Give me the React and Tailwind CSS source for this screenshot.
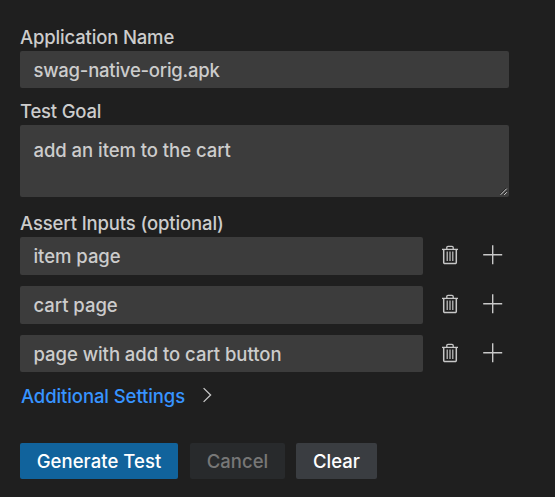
import React from "react";

function TrashIcon() {
  return (
    <svg width="18" height="20" viewBox="0 0 18 20" fill="none" stroke="#c8c8c8" strokeWidth="1.3">
      <path d="M1 4.4h16" />
      <path d="M5.8 4V2.6a1.2 1.2 0 0 1 1.2-1.2h4a1.2 1.2 0 0 1 1.2 1.2V4" />
      <path d="M2.7 4.5v12.9a1.2 1.2 0 0 0 1.2 1.2h10.2a1.2 1.2 0 0 0 1.2-1.2V4.5" strokeWidth="1.5" />
      <path d="M6.2 6.5v9.6M9 6.5v9.6M11.8 6.5v9.6" strokeWidth="1.2" />
    </svg>
  );
}

function PlusIcon() {
  return (
    <svg width="20" height="20" viewBox="0 0 20 20" fill="none" stroke="#c8c8c8" strokeWidth="1.4">
      <path d="M9.7 0.2v19M0.2 9.7h19" />
    </svg>
  );
}

function AssertRow({ text, size }) {
  return (
    <div className="flex h-[49px] items-start">
      <div className={`flex w-[403px] items-center rounded-[2px] bg-[#3c3c3c] pl-[13.5px] tracking-[-0.04px] ${size}`}>
        <span>{text}</span>
      </div>
      <button className="mt-[8px] ml-[18px]"><TrashIcon /></button>
      <button className="mt-[8px] ml-[24px]"><PlusIcon /></button>
    </div>
  );
}

export default function App() {
  return (
    <main className="h-[497px] w-[555px] overflow-hidden bg-[#1f1f1f] pt-[24px] pl-[20px] font-['Inter',sans-serif] text-[18.5px] leading-[27px] font-[450] whitespace-nowrap text-[#cccccc]">
      <div className="h-[27px] tracking-[-0.16px]">Application Name</div>
      <div className="flex h-[37px] w-[489px] items-center rounded-[2px] bg-[#3c3c3c] pt-px pl-[13.5px]">
        <span className="tracking-[-0.23px]">swag-native-orig.apk</span>
      </div>
      <div className="mt-[10px] h-[27px] tracking-[-0.2px]">Test Goal</div>
      <div className="flex h-[72px] w-[489px] justify-between rounded-[2px] bg-[#3c3c3c] pt-[12px] pl-[13.5px]">
        <span className="tracking-[-0.05px]">add an item to the cart</span>
        <svg className="mr-[1px] mb-[1px] self-end" width="8" height="8" viewBox="0 0 8 8" fill="none">
          <path d="M0.7 6.7l6-6M4.2 6.9l2.7-2.7" stroke="#d0d0d0" strokeWidth="1" />
          <path d="M0 6l6-6M3.4 6.3l3-3" stroke="#1f1f1f" strokeWidth="0.8" />
        </svg>
      </div>
      <div className="mt-[13px] h-[27px] tracking-[-0.13px]">Assert Inputs (optional)</div>
      <AssertRow text="item page" size="h-[38px]" />
      <AssertRow text="cart page" size="h-[38px]" />
      <AssertRow text="page with add to cart button" size="h-[37px] pt-px" />
      <div className="-mt-[1px] flex h-[24px] items-center pl-[1px]">
        <a className="w-[181.5px] pt-[2px] tracking-[-0.1px] text-[#3794ff]">Additional Settings</a>
        <svg width="9" height="16" viewBox="0 0 9 16" fill="none" stroke="#c8c8c8" strokeWidth="1.3">
          <path d="M0.6 1.1l7 6.9-7 6.9" />
        </svg>
      </div>
      <div className="mt-[36px] flex h-[36px]">
        <button className="w-[158px] rounded-[2px] bg-[#11639c] tracking-[0.05px] text-white">Generate Test</button>
        <button className="ml-[12px] w-[95px] rounded-[2px] bg-[#282a2c] text-[#777777]">Cancel</button>
        <button className="ml-[11px] w-[81px] rounded-[2px] bg-[#3a3d41] text-white">Clear</button>
      </div>
    </main>
  );
}
